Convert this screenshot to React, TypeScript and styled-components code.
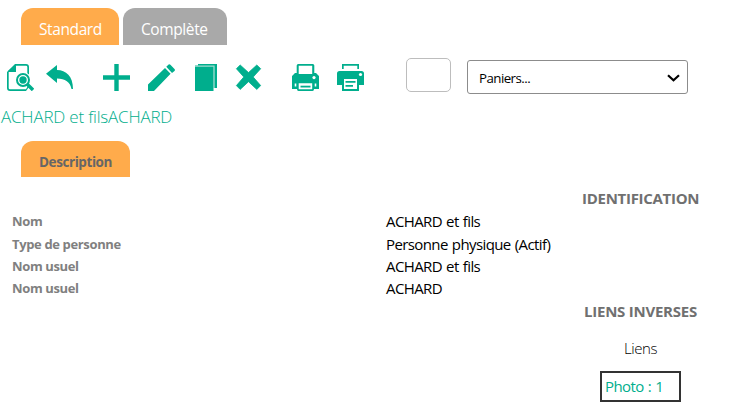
import React from "react";
import styled, { createGlobalStyle } from "styled-components";

const GREEN = "#00ae8d";

const GlobalStyle = createGlobalStyle`
  * { box-sizing: border-box; }
  body {
    margin: 0;
    background: #fff;
    font-family: "Open Sans", "Noto Sans", sans-serif;
    color: #000;
  }
`;

const Page = styled.main`
  width: 754px;
  height: 411px;
  padding-top: 8px;
  overflow: hidden;
  white-space: nowrap;
`;

const Tabs = styled.nav`
  display: flex;
  gap: 4px;
  padding-left: 21px;
`;

const Tab = styled.div<{ $width: number; $active?: boolean }>`
  width: ${(p) => p.$width}px;
  height: 37px;
  padding-left: 18px;
  border-radius: 12px 12px 0 0;
  background: ${(p) => (p.$active ? "#ffab4b" : "#a9a9a9")};
  color: #fff;
  font-size: 15.5px;
  font-weight: 500;
  line-height: 43px;
  letter-spacing: -0.4px;
`;

const Toolbar = styled.div`
  display: flex;
  align-items: flex-start;
  height: 61px;
  padding: 13px 0 0 7px;
`;

const IconGroup = styled.div<{ $gap: number; $after: number }>`
  display: flex;
  gap: ${(p) => p.$gap}px;
  margin: 6px ${(p) => p.$after}px 0 0;
`;

const Icon = styled.svg<{ $width?: number }>`
  display: block;
  width: ${(p) => p.$width ?? 27}px;
  height: 27px;
  fill: ${GREEN};
`;

const SmallField = styled.input`
  width: 45px;
  height: 34px;
  padding: 0;
  border: 1px solid #bdbdbd;
  border-radius: 5px;
  background: #fff;
`;

const Select = styled.div`
  display: flex;
  align-items: center;
  justify-content: space-between;
  width: 221px;
  height: 34px;
  margin: 2px 0 0 16px;
  padding: 1px 7px 0 11px;
  border: 1px solid #8c8c8c;
  border-radius: 3px;
  font-size: 13.3px;
  letter-spacing: -0.55px;
`;

const Title = styled.h1`
  margin: 0;
  height: 35px;
  padding-left: 1px;
  color: ${GREEN};
  font-size: 17px;
  font-weight: 300;
  line-height: 22px;
  letter-spacing: -0.2px;
`;

const SectionTab = styled(Tab)`
  height: 36px;
  color: #666;
  font-size: 13.5px;
  font-weight: 700;
  letter-spacing: -0.42px;
`;

const SectionTitle = styled.h2<{ $spacing: number }>`
  width: 117px;
  margin: 0 0 0 582px;
  color: #707070;
  font-size: 15px;
  font-weight: 700;
  line-height: 22px;
  text-align: center;
  letter-spacing: ${(p) => p.$spacing}px;
`;

const Details = styled.section`
  padding-top: 10px;
`;

const Row = styled.div<{ $height?: number }>`
  display: grid;
  grid-template-columns: 374px 1fr;
  height: ${(p) => p.$height ?? 22}px;
  padding-left: 12px;
  line-height: 24px;
`;

const Label = styled.span`
  color: #808080;
  font-size: 13px;
  font-weight: 700;
  letter-spacing: -0.36px;
`;

const Value = styled.span`
  font-size: 15px;
  line-height: 25px;
  letter-spacing: -0.6px;
  word-spacing: 0.8px;
`;

const Links = styled.section`
  display: flex;
  flex-direction: column;
  align-items: flex-start;
  padding-top: 2px;
`;

const LinksCaption = styled.div`
  margin: 15px 0 0 624px;
  font-size: 15px;
  font-weight: 300;
  line-height: 22px;
  letter-spacing: -0.4px;
`;

const PhotoLink = styled.a`
  width: 81px;
  height: 31px;
  margin: 12px 0 0 600px;
  padding-left: 3px;
  border: 2px solid #333;
  color: ${GREEN};
  font-size: 15px;
  line-height: 27px;
  letter-spacing: -0.6px;
  word-spacing: 0.8px;
`;

const PreviewIcon = () => (
  <Icon viewBox="0 0 27 27">
    <path fillRule="evenodd" d="M8 0H19Q22 0 22 3V23L19 27H3Q0 27 0 24V8ZM9 1.7V8H1.7V24Q1.7 25.3 3 25.3H19L20.3 23V3Q20.3 1.7 19 1.7Z" />
    <path d="M8 1V7H1Z" />
    <circle cx="16" cy="16" r="8" fill="#fff" />
    <path d="M20 20L26 26" stroke={GREEN} strokeWidth="3.4" />
    <circle cx="16" cy="16" r="6" fill="#fff" stroke={GREEN} strokeWidth="2" />
    <circle cx="16" cy="16" r="3.7" />
  </Icon>
);

const BackIcon = () => (
  <Icon viewBox="0 0 27 27">
    <path d="M0 9.8L11 1V6C20 6.3 27 12 27 25H25.5C24.5 18.5 19 14.5 11 14.5V19Z" />
  </Icon>
);

const AddIcon = () => (
  <Icon viewBox="0 0 27 27">
    <path d="M11.3 0H15.7V11.3H27V15.7H15.7V27H11.3V15.7H0V11.3H11.3Z" />
  </Icon>
);

const EditIcon = () => (
  <Icon viewBox="0 0 27 27">
    <path d="M0 20.5L17 4L22.6 9.8L6 27H0ZM18.3 2.8L20.6 .6Q21.4-.2 22.4.7L26.5 5Q27.4 6 26.5 7L24 9Z" />
  </Icon>
);

const CopyIcon = () => (
  <Icon $width={24} viewBox="0 0 24 27">
    <path d="M5 0H24V24H5Z" />
    <path d="M2 1.5H20.5V27H2Z" />
    <path d="M2 2.2H21V24" fill="none" stroke="#a0dcd0" strokeWidth="1.3" />
  </Icon>
);

const DeleteIcon = () => (
  <Icon viewBox="0 0 27 27">
    <path d="M5.2 1L13.5 8.6L21.8 1L25.7 4.7L18.2 13L25.7 21.6L21.8 25.4L13.5 17.7L5.2 25.4L1.4 21.6L8.8 13L1.4 4.7Z" stroke={GREEN} strokeWidth=".8" strokeLinejoin="round" />
  </Icon>
);

const PrintPageIcon = () => (
  <Icon viewBox="0 0 27 27">
    <path d="M6.2 0H20.8Q22.3 0 22.3 1.5V9H24L27 12V25H22Q22 27 20.5 27H6.5Q5 27 5 25H0V12L3 9H4.7V1.5Q4.7 0 6.2 0Z" />
    <path d="M6.7 1.8H20.2V10H6.7ZM6.7 19.3H20.2V25.3H6.7Z" fill="#fff" />
    <path d="M2.7 19.5H4.3V22.5H2.7ZM22.7 19.5H24.3V22.5H22.7Z" fill="#fff" />
    <circle cx="22" cy="13.6" r="1.6" fill="#fff" />
    <path d="M8.5 21.7H18.5V23.5H8.5Z" />
  </Icon>
);

const PrintIcon = () => (
  <Icon viewBox="0 0 27 27">
    <path d="M5 0H22V5H20.3V1.7H6.7V5H5ZM2.5 7H24.5Q27 7 27 9.5V21H22V27H5V21H0V9.5Q0 7 2.5 7Z" />
    <path d="M7 15H20V25H7Z" fill="#fff" />
    <path d="M8.5 17H18.5V18.7H8.5ZM8.5 21H16V22.7H8.5Z" />
    <circle cx="23.5" cy="10.5" r="1.6" fill="#fff" />
  </Icon>
);

const Chevron = styled.svg`
  width: 13px;
  height: 8px;
  fill: none;
  stroke: #000;
  stroke-width: 2.2;
`;

const rows = [
  { label: "Nom", value: "ACHARD et fils", height: 23 },
  { label: "Type de personne", value: "Personne physique (Actif)" },
  { label: "Nom usuel", value: "ACHARD et fils" },
  { label: "Nom usuel", value: "ACHARD" },
];

export default function App() {
  return (
    <>
      <GlobalStyle />
      <Page>
        <Tabs>
          <Tab $width={98} $active>Standard</Tab>
          <Tab $width={104}>Complète</Tab>
        </Tabs>
        <Toolbar>
          <IconGroup $gap={12} $after={30}>
            <PreviewIcon />
            <BackIcon />
          </IconGroup>
          <IconGroup $gap={18} $after={30}>
            <AddIcon />
            <EditIcon />
            <CopyIcon />
            <DeleteIcon />
          </IconGroup>
          <IconGroup $gap={18} $after={42}>
            <PrintPageIcon />
            <PrintIcon />
          </IconGroup>
          <SmallField aria-label="Nombre" />
          <Select>
            Paniers...
            <Chevron viewBox="0 0 13 8"><path d="M1 1.2L6.5 6.2L12 1.2" /></Chevron>
          </Select>
        </Toolbar>
        <Title>ACHARD et filsACHARD</Title>
        <Tabs>
          <SectionTab $width={109} $active>Description</SectionTab>
        </Tabs>
        <Details>
          <SectionTitle $spacing={-0.28}>IDENTIFICATION</SectionTitle>
          {rows.map((row, i) => (
            <Row key={i} $height={row.height}>
              <Label>{row.label}</Label>
              <Value>{row.value}</Value>
            </Row>
          ))}
        </Details>
        <Links>
          <SectionTitle $spacing={-0.25}>LIENS INVERSES</SectionTitle>
          <LinksCaption>Liens</LinksCaption>
          <PhotoLink>Photo : 1</PhotoLink>
        </Links>
      </Page>
    </>
  );
}
